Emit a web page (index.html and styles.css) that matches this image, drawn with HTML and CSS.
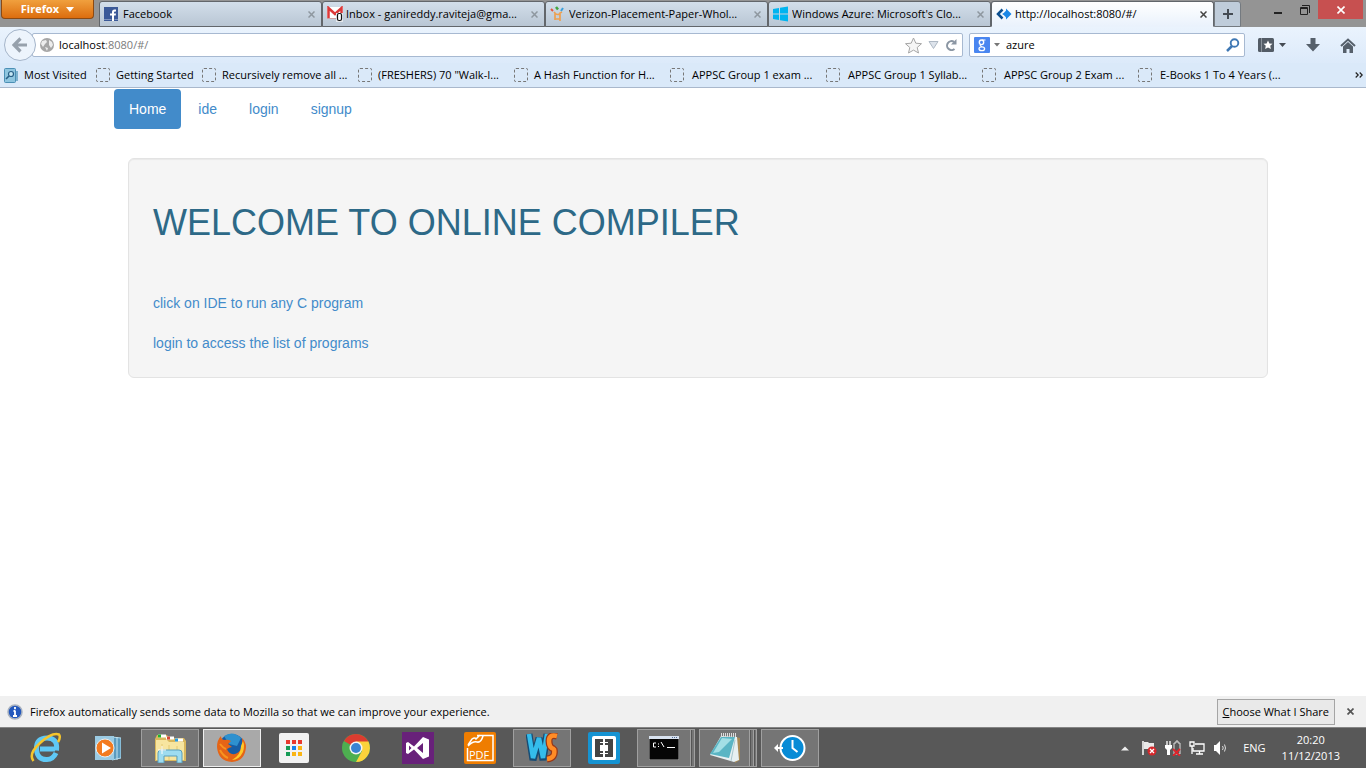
FILE: index.html
```html
<!DOCTYPE html>
<html lang="en">
<head>
<meta charset="utf-8">
<title>Online Compiler</title>
<link rel="stylesheet" href="styles.css">
</head>
<body>
<header class="chrome">
  <div class="titlebar">
    <button class="firefox-btn" type="button">Firefox <svg width="8" height="5" viewBox="0 0 8 5"><path d="M0 0h8L4 5z" fill="#fff"/></svg></button>
    <div class="tabs">
      <div class="tab">
        <svg width="14" height="14" viewBox="0 0 14 14"><rect width="14" height="14" fill="#3b5998"/><path d="M8 14V8.500H6V6.500H8V5Q8 2.500 10.500 2.500H12V4.500H11Q10 4.500 10 5.500V6.500H12L11.700 8.500H10V14z" fill="#fff"/><path d="M0 12.500h7.500M10.500 12.500H14" stroke="#7f94bf"/></svg>
        <span class="tab-title wide">Facebook</span>
        <button class="tab-close" type="button" aria-label="Close tab"><svg width="7" height="7" viewBox="0 0 7 7"><path d="M.5.5l6 6M6.500.5l-6 6"/></svg></button>
      </div>
      <div class="tab">
        <svg width="16" height="16" viewBox="0 0 16 16"><rect y="1" width="16" height="11" fill="#fff"/><path d="M1.500 12V2L8 8l6.500-6v7" fill="none" stroke="#dd3838" stroke-width="2.500"/><path d="M0 12.500h9" stroke="#cfa0a0"/><rect x="9" y="7" width="7" height="9" fill="#e5e8ec"/><rect x="10.500" y="7.500" width="4" height="7" rx="1.500" fill="#fff" stroke="#111" stroke-width="1.200"/></svg>
        <span class="tab-title">Inbox - ganireddy.raviteja@gma...</span>
        <button class="tab-close" type="button" aria-label="Close tab"><svg width="7" height="7" viewBox="0 0 7 7"><path d="M.5.5l6 6M6.500.5l-6 6"/></svg></button>
      </div>
      <div class="tab">
        <svg width="16" height="16" viewBox="0 0 16 16"><path d="M4 6l1 1v7M12 6l-2 1v8M5 7.500q3 2 5 0M5 13h5" fill="none" stroke="#eda052" stroke-width="1.700"/><path d="M1 3l2 2" stroke="#e5553b" stroke-width="2"/><path d="M6 1l2 2.500" stroke="#43a542" stroke-width="2.500"/><path d="M11 5l2-3" stroke="#3ba0db" stroke-width="2"/></svg>
        <span class="tab-title">Verizon-Placement-Paper-Whol...</span>
        <button class="tab-close" type="button" aria-label="Close tab"><svg width="7" height="7" viewBox="0 0 7 7"><path d="M.5.5l6 6M6.500.5l-6 6"/></svg></button>
      </div>
      <div class="tab">
        <svg width="16" height="16" viewBox="0 0 16 16"><path d="M0 3l6-1v5.500H0zM7 1.800L15 .5v7H7zM0 8.500h6V14l-6-1zM7 8.500h8v7l-8-1.300z" fill="#00b4f0"/></svg>
        <span class="tab-title">Windows Azure: Microsoft's Clo...</span>
        <button class="tab-close" type="button" aria-label="Close tab"><svg width="7" height="7" viewBox="0 0 7 7"><path d="M.5.5l6 6M6.500.5l-6 6"/></svg></button>
      </div>
      <div class="tab active">
        <svg width="16" height="16" viewBox="0 0 16 16"><path d="M6.500 3.500L2 8l4.500 4.500" fill="none" stroke="#0d4f8f" stroke-width="2.500"/><path d="M10 2.500L15.500 8 10 13.500V10L6 8l4-2z" fill="#1b87e6"/><path d="M10.500 4L7 8l3.500 4z" fill="#1b87e6"/></svg>
        <span class="tab-title">http://localhost:8080/#/</span>
        <button class="tab-close" type="button" aria-label="Close tab"><svg width="7" height="7" viewBox="0 0 7 7"><path d="M.5.5l6 6M6.500.5l-6 6"/></svg></button>
      </div>
      <button class="new-tab" type="button" aria-label="New tab"><svg width="10" height="10" viewBox="0 0 10 10"><path d="M5 0v10M0 5h10" stroke="#444b53" stroke-width="2"/></svg></button>
    </div>
    <div class="window-controls">
      <button type="button" aria-label="Minimize"><svg width="8" height="10" viewBox="0 0 8 10"><path d="M0 8h8" stroke="#222" stroke-width="2"/></svg></button>
      <button type="button" aria-label="Restore"><svg width="10" height="10" viewBox="0 0 10 10"><path d="M2 .5h7.500V8M.5 2.500h7v7h-7zM.5 3.500h7" fill="none" stroke="#222"/></svg></button>
      <button class="close" type="button" aria-label="Close"><svg width="8" height="8" viewBox="0 0 8 8"><path d="M.5.5l7 7M7.500.5l-7 7" stroke="#fff" stroke-width="1.600"/></svg></button>
    </div>
  </div>
  <div class="toolbar">
    <button class="back" type="button" aria-label="Back"><svg width="16" height="16" viewBox="0 0 16 16"><path d="M8.500 1.500L2 8l6.500 6.500M3 8h12" fill="none" stroke="#97a1ac" stroke-width="3.200"/></svg></button>
    <form class="urlbar">
      <svg width="14" height="14" viewBox="0 0 14 14"><circle cx="7" cy="7" r="7" fill="#a6a6a6"/><path d="M2 3l4-1 1 2-2 2-2 3-2-3zM9 2l3 2 1 3-2 3-2-3zM5 9l3 1-1 3z" fill="#ededed"/></svg>
      <div class="address"><label for="url">localhost</label><input id="url" type="text" value=":8080/#/"></div>
      <button type="button" aria-label="Bookmark"><svg width="17" height="17" viewBox="0 0 17 17"><path d="M8.500 1l2.300 5.200 5.700.5-4.300 3.800 1.300 5.500-5-2.900L3.500 16l1.300-5.500L.5 6.700l5.700-.5z" fill="#f6f6f6" stroke="#a6a6a6"/></svg></button>
      <button type="button" aria-label="History"><svg width="11" height="8" viewBox="0 0 11 8"><path d="M1 .5h9L5.500 7.500z" fill="#dde3eb" stroke="#aeb8c4"/></svg></button>
      <button type="button" aria-label="Reload"><svg width="12" height="12" viewBox="0 0 12 12"><path d="M9 2.800A4.500 4.500 0 1 0 9.500 10" fill="none" stroke="#8b96a3" stroke-width="2"/><path d="M11.500 0v5.500H6z" fill="#8b96a3"/></svg></button>
    </form>
    <form class="searchbar">
      <svg width="16" height="16" viewBox="0 0 16 16"><rect width="16" height="16" rx="1" fill="#4a86f0"/><ellipse cx="7.500" cy="5.300" rx="2.200" ry="2.300" fill="none" stroke="#fff" stroke-width="1.400"/><ellipse cx="7.800" cy="11.700" rx="2.800" ry="1.900" fill="none" stroke="#fff" stroke-width="1.300"/><path d="M8 3h3.500M6.500 7.500q-1 1.500 1.500 2" fill="none" stroke="#fff" stroke-width="1.200"/></svg>
      <svg width="6" height="4" viewBox="0 0 6 4"><path d="M0 0h6L3 3.500z" fill="#777"/></svg>
      <input type="text" value="azure" aria-label="Search">
      <button type="button" aria-label="Search"><svg width="14" height="14" viewBox="0 0 14 14"><circle cx="8.500" cy="5" r="3.800" fill="none" stroke="#3f78b4" stroke-width="1.900"/><path d="M6 8L1 13" stroke="#3f78b4" stroke-width="2.500"/></svg></button>
    </form>
    <div class="tools">
      <button type="button" aria-label="Bookmarks"><svg width="28" height="14" viewBox="0 0 28 14"><rect width="16" height="14" rx="1.500" fill="#535c66"/><path d="M3.500 0v14" stroke="#8b939c"/><path d="M10 2.500l1.400 3 3.100.3-2.300 2 .7 3.200-2.900-1.600L7.100 11l.7-3.200-2.300-2 3.100-.3z" fill="#fff"/><path d="M21 5h7L24.500 9z" fill="#444b53"/></svg></button>
      <button type="button" aria-label="Downloads"><svg width="14" height="14" viewBox="0 0 14 14"><path d="M4.500 0h5v6H14l-7 7.500L0 6h4.500z" fill="#56606b"/></svg></button>
      <button type="button" aria-label="Home"><svg width="16" height="15" viewBox="0 0 16 15"><path d="M1 8l7-6.500L15 8" fill="none" stroke="#56606b" stroke-width="2"/><path d="M3 8.500L8 4l5 4.500V15H9.500v-4h-3v4H3z" fill="#56606b"/></svg></button>
    </div>
  </div>
  <nav class="bookmarks" aria-label="Bookmarks">
    <a class="mark first" href="#"><svg width="14" height="15" viewBox="0 0 14 15"><rect x=".5" y=".5" width="11" height="14" rx="1" fill="#8ec5df" stroke="#4b8fb5"/><path d="M13 3v10" stroke="#5f9fc1" stroke-width="1.500"/><circle cx="7" cy="6" r="2.500" fill="#c6e7f5" stroke="#285f86" stroke-width="1.200"/><path d="M5 8l-3 3" stroke="#285f86" stroke-width="1.600"/></svg>Most Visited</a>
    <a class="mark second" href="#"><i class="blank"></i>Getting Started</a>
    <a class="mark" href="#"><i class="blank"></i>Recursively remove all ...</a>
    <a class="mark" href="#"><i class="blank"></i>(FRESHERS) 70 "Walk-I...</a>
    <a class="mark" href="#"><i class="blank"></i>A Hash Function for H...</a>
    <a class="mark indent" href="#"><i class="blank"></i>APPSC Group 1 exam ...</a>
    <a class="mark indent" href="#"><i class="blank"></i>APPSC Group 1 Syllab...</a>
    <a class="mark indent" href="#"><i class="blank"></i>APPSC Group 2 Exam ...</a>
    <a class="mark indent" href="#"><i class="blank"></i>E-Books 1 To 4 Years (...</a>
    <button class="more" type="button" aria-label="More bookmarks"><svg width="8" height="6" viewBox="0 0 8 6"><path d="M.7.5L3.200 3 .7 5.500M4.700.5L7.200 3 4.700 5.500" fill="none" stroke="#222" stroke-width="1.200"/></svg></button>
  </nav>
</header>

<main class="page">
  <div class="container">
    <nav class="pills">
      <a class="pill selected" href="#">Home</a>
      <a class="pill" href="#">ide</a>
      <a class="pill" href="#">login</a>
      <a class="pill" href="#">signup</a>
    </nav>
    <section class="well">
      <h1>WELCOME TO ONLINE COMPILER</h1>
      <p><a href="#">click on IDE to run any C program</a></p>
      <p><a href="#">login to access the list of programs</a></p>
    </section>
  </div>
</main>

<div class="infobar">
  <svg width="16" height="16" viewBox="0 0 16 16"><circle cx="8" cy="8" r="7" fill="#2358bd" stroke="#a9b2bf" stroke-width="1.500"/><path d="M8 3v2.200M8 6.500V12M6.500 7H8M6 12h4" stroke="#fff" stroke-width="1.800"/></svg>
  <span class="message">Firefox automatically sends some data to Mozilla so that we can improve your experience.</span>
  <button class="share" type="button"><u>C</u>hoose What I Share</button>
  <button class="dismiss" type="button" aria-label="Dismiss"><svg width="7" height="7" viewBox="0 0 7 7"><path d="M.5.5l6 6M6.500.5l-6 6" stroke="#555" stroke-width="1.700"/></svg></button>
</div>

<footer class="taskbar">
  <div class="apps">
    <button class="app" type="button" aria-label="Internet Explorer"><svg width="32" height="32" viewBox="0 0 32 32"><path d="M25 17H10M26.500 18.500Q28 6 17 6T6.500 17 17 27.500q6 0 9-6.500" fill="none" stroke="#5fc8f5" stroke-width="5"/><path d="M3.500 29Q-2 22 10 11T29 2.500Q31 5 28 10" fill="none" stroke="#f5c52c" stroke-width="2.500"/></svg></button>
    <button class="app" type="button" aria-label="Media Player"><svg width="26" height="26" viewBox="0 0 26 26"><path d="M17 2l9 1v20l-9 2z" fill="#5b9bbf" stroke="#b5def0"/><path d="M22 2v23" stroke="#c3e5f3"/><rect y="1" width="19" height="24" fill="#9bcbe3"/><circle cx="10" cy="13" r="9" fill="#f37b20" stroke="#e8eff3"/><path d="M7 7.500v11l9-5.500z" fill="#fff"/></svg></button>
    <button class="app open" type="button" aria-label="File Explorer"><svg width="32" height="30" viewBox="0 0 32 30"><path d="M1 6l2-4h10l2 3h15l2 3v20H1z" fill="#d9b75c"/><path d="M2 7h11l2 2h15v18H2z" fill="#f7e5a0"/><path d="M4 3h8M12 5h8M21 7h8" stroke="#fff" stroke-width="3"/><path d="M4 3h3" stroke="#21b32c" stroke-width="3"/><path d="M13 5h3" stroke="#da4936" stroke-width="3"/><path d="M21 7h3" stroke="#289be2" stroke-width="3"/><path d="M8 11v17M15 12v15M23 13v14" stroke="#e4c971"/><path d="M4 30V20q0-3 3-3h18q3 0 3 3v10h-5v-7H10v7z" fill="#9edcf0" stroke="#589fbd"/><path d="M8 13v8M4 17h8" stroke="#fff"/></svg></button>
    <button class="app current" type="button" aria-label="Firefox"><svg width="32" height="32" viewBox="0 0 32 32"><circle cx="16" cy="15" r="13" fill="#175da5"/><path d="M8 4q9-6 17 2l-4 8-8-2z" fill="#2e91cf"/><path d="M26 6q4 4 4 9-1 14-14 15Q2 29 1 15q0-7 4-11 0 3 3 4 4-1 7 1l-3 3 4 3q-2 0-5 2 2 6 8 5 8-2 7-16z" fill="#e56416"/><path d="M27 9q2 5 0 11-4 8-11 8 9-5 9-14" fill="#ffc928"/><path d="M4 12q3 4 6 5M4 18q3 6 8 8" fill="none" stroke="#f8931f" stroke-width="2"/></svg></button>
    <button class="app" type="button" aria-label="App Launcher"><svg width="30" height="30" viewBox="0 0 30 30"><rect width="30" height="30" rx="2" fill="#f2f2f2"/><path d="M7 9h4m2 0h4m2 0h4" stroke="#e8392e" stroke-width="4"/><path d="M7 15h4m-4 6h4" stroke="#169b56" stroke-width="4"/><path d="M13 15h4" stroke="#1683ec" stroke-width="4"/><path d="M19 15h4m-10 6h4m2 0h4" stroke="#fab514" stroke-width="4"/></svg></button>
    <button class="app" type="button" aria-label="Chrome"><svg width="28" height="28" viewBox="0 0 28 28"><circle cx="14" cy="14" r="14" fill="#4daf50"/><path d="M14 14L2 7Q6 0 14 0t12.500 7.500z" fill="#dc3c30"/><path d="M14 7.500h12.500Q30 16 25 22.500 21 28 14 28l6-11z" fill="#fbd33b"/><circle cx="14" cy="14" r="6.500" fill="#f5f5f5"/><circle cx="14" cy="14" r="5" fill="#3984d2"/></svg></button>
    <button class="app" type="button" aria-label="Visual Studio"><svg width="32" height="32" viewBox="0 0 32 32"><rect width="32" height="32" fill="#68217a"/><path d="M4 11l2-1 6 4.500L21 5l6 2.500v17L21 27l-9-9.500L6 22l-2-1zm3 2.500v5l2.500-2.500zM21 11l-6 5 6 5z" fill="#fff" fill-rule="evenodd"/></svg></button>
    <button class="app" type="button" aria-label="PDF"><svg width="32" height="32" viewBox="0 0 32 32"><rect width="32" height="32" rx="2" fill="#ef7d00"/><path d="M13 3.500h16v25H3.500V16M4 13l4-6q3-2 4 0l4-4M4 14q5-5 9-4t6-6" fill="none" stroke="#fff" stroke-width="1.500"/><text x="5" y="27" class="pdf-word">PDF</text></svg></button>
    <button class="app open" type="button" aria-label="WebStorm"><svg width="32" height="30" viewBox="0 0 32 30"><g fill="none" stroke-linejoin="bevel"><path d="M3 1l4 26 6-22 4 22 4-26" stroke="#164c75" stroke-width="7"/><path d="M3 1l4 24 6-20 4 20 4-24" stroke="#34bceb" stroke-width="4.500"/><path d="M31 3q-8-2-8 5t5 8q2 9-7 10" stroke="#963719" stroke-width="7"/><path d="M31 3q-8-2-8 5t5 8q2 9-7 10" stroke="#ff8c26" stroke-width="4.500"/></g></svg></button>
    <button class="app" type="button" aria-label="Brackets"><svg width="32" height="32" viewBox="0 0 32 32"><rect width="32" height="32" rx="2" fill="#1593d2"/><rect x="4" y="4" width="24" height="24" rx="2" fill="#fff"/><path d="M7 7h8v6h-3v6h3v6H7zM17 7h8v18h-8v-6h3v-6h-3z" fill="#444"/><path d="M12 10.500h3M12 21.500h3M17 10.500h3M17 21.500h3" stroke="#fff" stroke-width="1"/></svg></button>
    <button class="app open stack" type="button" aria-label="Command Prompt"><svg width="30" height="24" viewBox="0 0 30 24"><rect width="30" height="24" fill="#050505" stroke="#aaa"/><path d="M0 1.500h30" stroke="#d8e2ef" stroke-width="3"/><path d="M23 1.500h6" stroke="#536b92" stroke-dasharray="1 1"/><path d="M7 7H4.500v4H7M9.500 7.500v1M9.500 10v1M12 6l3 5M18 11.500h8" fill="none" stroke="#fff"/></svg></button>
    <button class="app open stack triple" type="button" aria-label="Notepad"><svg width="32" height="30" viewBox="0 0 32 30"><path d="M26 4l4 1v22l-5 3z" fill="#a78854"/><path d="M11 3l16 1 2 23-5 2L0 22z" fill="#e7f0f2"/><path d="M11 4h14l-6 21L0 21z" fill="#5ab5c4"/><path d="M12 5l10 1L9 19 3 20z" fill="#a3dfe5"/><path d="M11 2h16" stroke="#ddd" stroke-width="4" stroke-dasharray="1 1"/><path d="M25 7l-4 21" stroke="#a9c7ce"/></svg></button>
    <button class="app open" type="button" aria-label="Backup"><svg width="32" height="28" viewBox="0 0 32 28"><circle cx="18.500" cy="14" r="12" fill="#078bd6" stroke="#fff" stroke-width="2"/><path d="M18.500 6v8l5 4" fill="none" stroke="#fff" stroke-width="2"/><path d="M0 14l4-4v3h5v2H4v3z" fill="#fff"/></svg></button>
  </div>
  <div class="tray">
    <svg width="8" height="5" viewBox="0 0 8 5"><path d="M0 4.500L4 .5l4 4z" fill="#eee"/></svg>
    <svg width="16" height="16" viewBox="0 0 16 16"><path d="M2 1v14" stroke="#fff" stroke-width="1.500"/><path d="M3 2h4l1 1h5v7H8L7 9H3z" fill="#e9e9e9"/><circle cx="11" cy="11" r="4.500" fill="#d5272b"/><path d="M9 9l4 4m0-4l-4 4" stroke="#fff" stroke-width="1.300"/></svg>
    <svg width="16" height="16" viewBox="0 0 16 16"><path d="M2 1v4M5 1v4" stroke="#fff" stroke-width="1.300"/><path d="M0 5h7v3L5 10v5H2v-5L0 8z" fill="#fff"/><path d="M9 14V3h2V1h2v2h2v11z" fill="none" stroke="#ddd"/><path d="M8 9l7 7m0-7l-7 7" stroke="#df242b" stroke-width="1.800"/></svg>
    <svg width="16" height="14" viewBox="0 0 16 14"><path d="M6 3h9v7H4V7M7 13h7M10.500 10v3" fill="none" stroke="#fff" stroke-width="1.300"/><path d="M1 1h4v4H1zM3 5v8" fill="none" stroke="#fff" stroke-width="1.300"/></svg>
    <svg width="14" height="14" viewBox="0 0 14 14"><path d="M1 4h2l4-4v14l-4-4H1z" fill="#fff"/><path d="M9.500 5q1.500 2 0 4M11.500 3.500q2 3.500 0 7" fill="none" stroke="#ddd"/></svg>
    <span class="lang">ENG</span>
    <div class="clock"><time>20:20</time><time>11/12/2013</time></div>
  </div>
</footer>
</body>
</html>
```
FILE: styles.css
```css
* { box-sizing: border-box; }
body {
  margin: 0;
  min-height: 100vh;
  display: flex;
  flex-direction: column;
  background: #fff;
  color: #000;
  font: 11px/16px "Open Sans", "Noto Sans", sans-serif;
}
svg { display: block; flex: none; }
button { margin: 0; padding: 0; border: 0; background: none; color: inherit; font: inherit; }
input { min-width: 0; padding: 0; border: 0; outline: 0; background: none; font: inherit; }
a { color: inherit; text-decoration: none; }
.chrome { border-bottom: 1px solid #a9b8cc; }

.titlebar { display: flex; height: 27px; background: #949494; }
.firefox-btn {
  display: flex; align-items: center; justify-content: center; gap: 7px;
  width: 93px; height: 19px; margin: 0 5px 0 1px;
  border: 1px solid #8b4a13; border-top: 0; border-radius: 0 0 4px 4px;
  background: linear-gradient(#f0a03e, #dc6d0e);
  color: #fff; font-weight: bold;
}
.tabs { display: flex; flex: 1; min-width: 0; padding-top: 1px; }
.tab {
  display: flex; align-items: center; gap: 3px; flex: 1 1 0; min-width: 0; max-width: 223px;
  padding: 0 6px 0 4px;
  border: 1px solid #62666b; border-radius: 3px 3px 0 0;
  background: linear-gradient(#d2deea, #b9c6d4);
}
.tab-title { flex: 1; min-width: 0; white-space: nowrap; overflow: hidden; }
.tab-title.wide { padding-left: 2px; }
.tab-close { stroke: #8e979f; stroke-width: 1.5; }
.tab.active { border-bottom-color: #eaf2fc; background: linear-gradient(#fff, #eaf2fc); }
.tab.active .tab-close { stroke: #444; }
.new-tab {
  display: grid; place-items: center; width: 27px;
  border: 1px solid #747a80; border-radius: 0 3px 0 0; background: #bfccda;
}
.window-controls { display: flex; height: 19px; margin-right: 3px; }
.window-controls button { display: grid; place-items: center; width: 27px; }
.window-controls .close { width: 45px; background: #c75050; }

.toolbar { display: flex; align-items: center; height: 36px; padding: 0 10px 0 4px; background: linear-gradient(#eaf3fd, #dceafa); }
.back {
  display: grid; place-items: center; width: 32px; height: 32px; flex: none; z-index: 1;
  border: 1px solid #a5b5ca; border-radius: 50%; background: #edf4fc;
}
.urlbar, .searchbar { display: flex; align-items: center; height: 24px; border: 1px solid #a7b9d1; border-radius: 2px; background: #fff; }
.urlbar { flex: 1; min-width: 0; gap: 6px; margin-left: -4px; padding: 0 5px 0 7px; }
.address { display: flex; flex: 1; min-width: 0; margin-left: -1px; }
.address input { flex: 1; color: #7b7b7b; }
.searchbar { flex: 0 1 276px; min-width: 0; gap: 4px; margin-left: 6px; padding: 0 4px; }
.searchbar input { flex: 1; margin-left: 2px; }
.tools { display: flex; align-items: center; gap: 20px; margin-left: 13px; }

.bookmarks { display: flex; align-items: center; height: 24px; padding: 0 3px 0 4px; background: #dae9f9; }
.mark { display: flex; align-items: center; gap: 6px; flex: 0 1 156px; min-width: 0; white-space: nowrap; overflow: hidden; }
.mark.first { flex-basis: 92px; }
.mark.second { flex-basis: 106px; }
.mark.indent { gap: 8px; }
.blank { flex: none; width: 14px; height: 14px; border: 1px dashed #777; border-radius: 2px; }
.more { margin-left: auto; }

.page { flex: 1; font: 14px/20px "Liberation Sans", Arial, sans-serif; color: #428bca; }
.container { max-width: 1170px; margin: 0 auto; padding: 1px 0 20px 16px; }
.pills { display: flex; gap: 2px; }
.pill { padding: 10px 15px; border-radius: 4px; }
.pill.selected { background: #428bca; color: #fff; }
.well {
  margin: 29px 0 0 14px; padding: 24px;
  border: 1px solid #e3e3e3; border-radius: 6px; background: #f5f5f5;
  box-shadow: inset 0 1px 1px rgba(0, 0, 0, .05);
}
.well h1 { margin: 20px 0 50px; font-size: 36px; line-height: 40px; font-weight: normal; color: #2d6987; }
.well p { margin: 20px 0 0; }

.infobar { display: flex; align-items: center; min-height: 31px; padding: 0 12px 0 7px; background: #f0f0f0; }
.message { flex: 1; margin-left: 7px; }
.share { height: 26px; padding: 0 5px; border: 1px solid #a5a5a5; background: #e9e9e9; }
.dismiss { margin-left: 12px; }

.taskbar { display: flex; justify-content: space-between; height: 41px; border-top: 1px solid #858585; background: #585858; color: #fff; }
.apps { display: flex; gap: 4px; padding: 1px 0 1px 17px; }
.app { display: grid; place-items: center; width: 58px; }
.app.open { border: 1px solid #a0a0a0; background: #757575; }
.app.current { border: 1px solid #eee; background: #a9a9a9; }
.app.stack { padding-right: 4px; background: linear-gradient(90deg, #757575 52px, #a0a0a0 52px, #a0a0a0 53px, #555 53px, #555 54px, #757575 54px); }
.app.triple { background: linear-gradient(90deg, #757575 49px, #a0a0a0 49px, #a0a0a0 50px, #555 50px, #555 51px, #757575 51px, #757575 53px, #a0a0a0 53px, #a0a0a0 54px, #555 54px, #555 55px, #757575 55px); }
.pdf-word { font: 11px "Open Sans", sans-serif; fill: #fff; }
.tray { display: flex; align-items: center; gap: 8px; padding-right: 26px; }
.tray svg:first-child { margin-right: 4px; }
.lang { margin: 0 8px; }
.clock { display: flex; flex-direction: column; align-items: center; }
```
